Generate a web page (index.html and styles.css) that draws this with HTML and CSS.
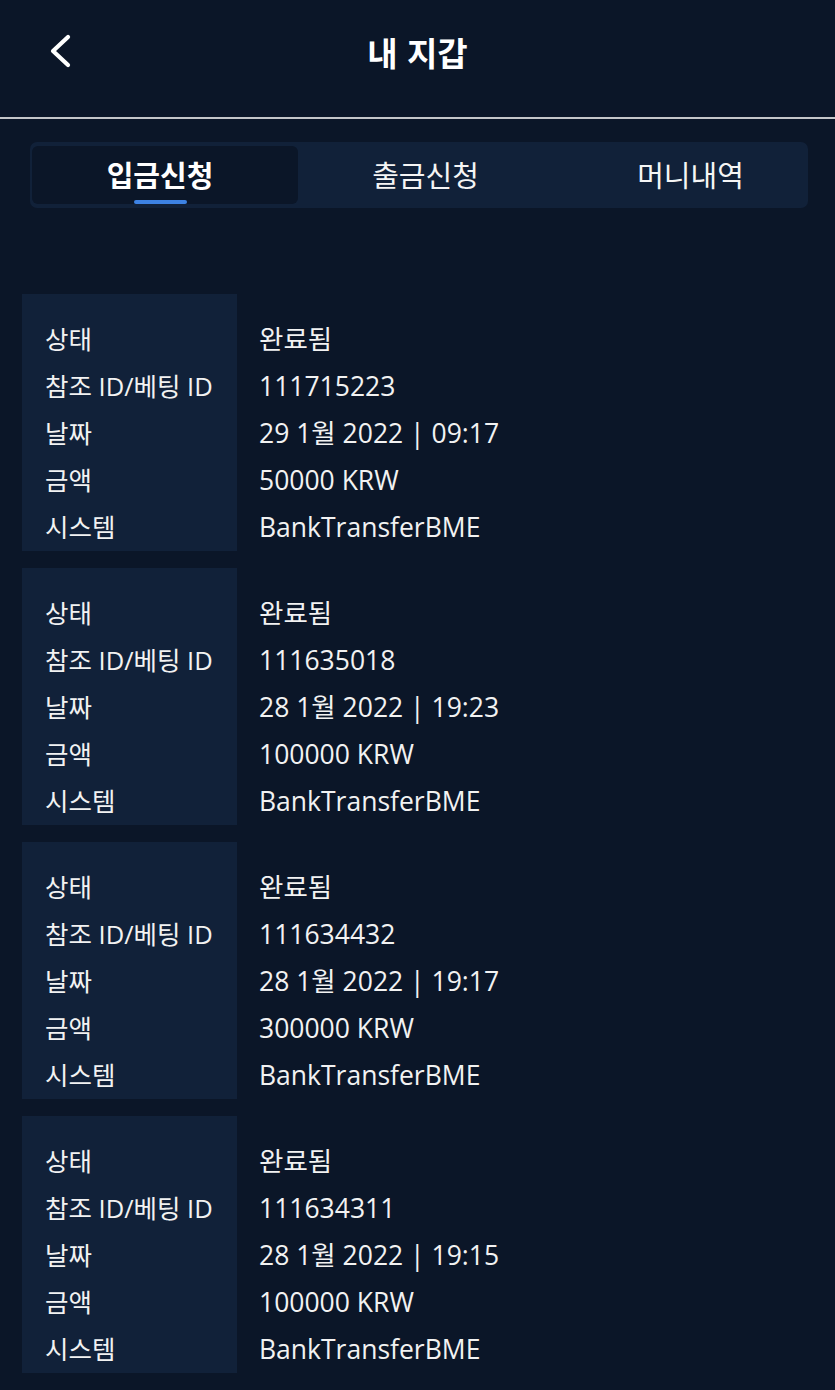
FILE: index.html
```html
<!DOCTYPE html>
<html lang="ko">
<head>
<meta charset="utf-8">
<link rel="stylesheet" href="styles.css">
</head>
<body>
<header class="topbar">
  <span class="back" aria-label="back">
    <svg width="24" height="34" viewBox="0 0 24 34"><path d="M20 3 L5 17 L20 31" fill="none" stroke="#fff" stroke-width="4.2" stroke-linecap="round" stroke-linejoin="round"/></svg>
  </span>
  <h1 class="title">내 지갑</h1>
</header>
<nav class="tabs">
  <div class="tab active"><span class="tab-label">입금신청</span><span class="bar"></span></div>
  <div class="tab"><span class="tab-label">출금신청</span></div>
  <div class="tab"><span class="tab-label">머니내역</span></div>
</nav>
<main class="list">
  <section class="card">
    <div class="labels"><div>상태</div><div>참조 ID/베팅 ID</div><div>날짜</div><div>금액</div><div>시스템</div></div>
    <div class="values"><div>완료됨</div><div>111715223</div><div>29 1월 2022 | 09:17</div><div>50000 KRW</div><div>BankTransferBME</div></div>
  </section>
  <section class="card">
    <div class="labels"><div>상태</div><div>참조 ID/베팅 ID</div><div>날짜</div><div>금액</div><div>시스템</div></div>
    <div class="values"><div>완료됨</div><div>111635018</div><div>28 1월 2022 | 19:23</div><div>100000 KRW</div><div>BankTransferBME</div></div>
  </section>
  <section class="card">
    <div class="labels"><div>상태</div><div>참조 ID/베팅 ID</div><div>날짜</div><div>금액</div><div>시스템</div></div>
    <div class="values"><div>완료됨</div><div>111634432</div><div>28 1월 2022 | 19:17</div><div>300000 KRW</div><div>BankTransferBME</div></div>
  </section>
  <section class="card">
    <div class="labels"><div>상태</div><div>참조 ID/베팅 ID</div><div>날짜</div><div>금액</div><div>시스템</div></div>
    <div class="values"><div>완료됨</div><div>111634311</div><div>28 1월 2022 | 19:15</div><div>100000 KRW</div><div>BankTransferBME</div></div>
  </section>
</main>
</body>
</html>
```

FILE: styles.css
```css
html, body {
  margin: 0;
  padding: 0;
  background: #0b1628;
  color: #f2f2f2;
  font-family: "Open Sans", "Noto Sans CJK KR", sans-serif;
  width: 835px;
  height: 1390px;
  overflow: hidden;
}

.topbar {
  position: relative;
  height: 117px;
  border-bottom: 2px solid #c4c6c9;
  display: flex;
  align-items: center;
  justify-content: center;
  box-sizing: content-box;
}

.back {
  position: absolute;
  left: 48px;
  top: 34px;
  display: block;
  line-height: 0;
}

.title {
  margin: 0;
  margin-top: -14px;
  font-family: "Noto Sans CJK KR", sans-serif;
  font-size: 33px;
  font-weight: 700;
  color: #ffffff;
  letter-spacing: 0;
}

.tabs {
  margin: 23px 0 0 30px;
  width: 778px;
  height: 66px;
  box-sizing: border-box;
  padding: 4px 2px;
  background: #112139;
  border-radius: 7px;
  display: flex;
}

.tab {
  position: relative;
  flex: 0 0 265px;
  display: flex;
  align-items: center;
  justify-content: center;
  padding-right: 10px;
  box-sizing: border-box;
  font-family: "Noto Sans CJK KR", sans-serif;
  font-size: 29px;
  color: #f5f5f5;
}

.tab.active {
  flex-basis: 266px;
  background: #0b1628;
  border-radius: 6px;
  font-weight: 700;
  color: #ffffff;
}

.tab-label {
  line-height: 1;
  margin-top: -2px;
}

.bar {
  position: absolute;
  left: 102px;
  bottom: 0;
  width: 53px;
  height: 4px;
  border-radius: 2px;
  background: #3d82e3;
}

.list {
  margin: 86px 0 0 22px;
  display: flex;
  flex-direction: column;
  gap: 17px;
}

.card {
  display: flex;
  line-height: 47px;
}

.labels {
  width: 215px;
  box-sizing: border-box;
  background: #112139;
  padding: 22px 0 0 23px;
  font-size: 25.5px;
}

.values {
  padding: 22px 0 0 22px;
  font-size: 26.5px;
}

.labels div, .values div {
  height: 47px;
  white-space: nowrap;
}
```
